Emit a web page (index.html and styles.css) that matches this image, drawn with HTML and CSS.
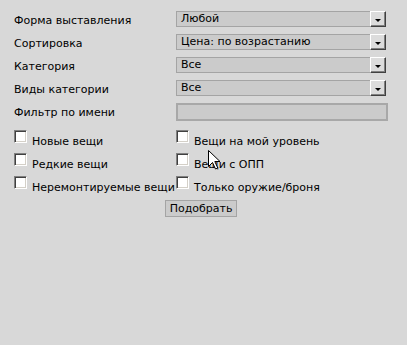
FILE: index.html
```html
<!DOCTYPE html>
<html lang="ru">
<head>
    <meta charset="UTF-8">
    <title>Подбор вещей</title>
    <link rel="stylesheet" href="styles.css">
</head>
<body>
    <form class="filter">
        <div class="fields">
            <label class="field-label">Форма выставления</label>
            <div class="select"><span class="select-value">Любой</span><span class="select-btn"><i class="arrow"></i></span></div>

            <label class="field-label">Сортировка</label>
            <div class="select"><span class="select-value">Цена: по возрастанию</span><span class="select-btn"><i class="arrow"></i></span></div>

            <label class="field-label">Категория</label>
            <div class="select"><span class="select-value">Все</span><span class="select-btn"><i class="arrow"></i></span></div>

            <label class="field-label">Виды категории</label>
            <div class="select"><span class="select-value">Все</span><span class="select-btn"><i class="arrow"></i></span></div>

            <label class="field-label">Фильтр по имени</label>
            <input class="text-input" type="text">
        </div>

        <div class="checks">
            <label class="check"><span class="box"></span><span class="check-text">Новые вещи</span></label>
            <label class="check"><span class="box"></span><span class="check-text">Вещи на мой уровень</span></label>
            <label class="check"><span class="box"></span><span class="check-text">Редкие вещи</span></label>
            <label class="check"><span class="box"></span><span class="check-text">Вещи с ОПП</span></label>
            <label class="check"><span class="box"></span><span class="check-text">Неремонтируемые вещи</span></label>
            <label class="check"><span class="box"></span><span class="check-text">Только оружие/броня</span></label>
        </div>

        <div class="actions">
            <button type="button" class="submit">Подобрать</button>
        </div>
    </form>

    <!-- mouse pointer -->
    <svg class="cursor" width="13" height="20" viewBox="0 0 13 20">
        <path d="M0.5 0.5 L0.5 16.5 L4.5 12.5 L7.5 19 L9.8 18 L6.8 11.5 L12 11.5 Z" fill="#fff" stroke="#000" stroke-width="1"/>
    </svg>
</body>
</html>
```

FILE: styles.css
```css
body { margin: 0; background: #d8d8d8; font-family: "DejaVu Sans", Verdana, sans-serif; font-size: 11px; color: #000; }
.filter { padding: 11px 19px 0 14px; }

.fields { display: grid; grid-template-columns: 162px 1fr; grid-template-rows: repeat(4, 16px) 18px; row-gap: 7px; }
.field-label { line-height: 12px; padding-top: 4px; white-space: nowrap; }
.select { display: flex; width: 210px; height: 16px; box-sizing: border-box; border: 1px solid #a4a4a4; background: #cbcbcb; }
.select-value { flex: 1; padding-left: 4px; line-height: 14px; }
.select-btn { display: flex; align-items: center; justify-content: center; width: 16px; height: 16px; margin: -1px -1px -1px 0; box-sizing: border-box; background: #dcdcdc; border-top: 1px solid #fff; border-left: 1px solid #fff; border-right: 1px solid #404040; border-bottom: 1px solid #404040; box-shadow: inset -1px -1px 0 #808080; }
.arrow { width: 0; height: 0; border-left: 3px solid transparent; border-right: 3px solid transparent; border-top: 3px solid #000; margin-top: 2px; }
.text-input { width: 212px; height: 18px; box-sizing: border-box; margin: 0; border: 2px solid #a8a8a8; background: #cbcbcb; }

.checks { display: grid; grid-template-columns: 162px 1fr; row-gap: 10px; margin-top: 9px; }
.check { display: flex; align-items: flex-start; height: 13px; white-space: nowrap; }
.box { width: 13px; height: 13px; box-sizing: border-box; background: #fff; border-top: 1px solid #808080; border-left: 1px solid #808080; border-right: 1px solid #fff; border-bottom: 1px solid #fff; box-shadow: inset 1px 1px 0 #404040, inset -1px -1px 0 #d4d0c8; }
.check-text { margin: 5px 0 0 5px; line-height: 13px; }

.actions { display: flex; justify-content: center; margin-top: 11px; }
.submit { height: 17px; padding: 0 4px; margin: 0; border: 1px solid #a4a4a4; background: #cbcbcb; font-family: inherit; font-size: 11px; line-height: 15px; color: #000; }

.cursor { position: absolute; left: 208px; top: 150px; }
```
